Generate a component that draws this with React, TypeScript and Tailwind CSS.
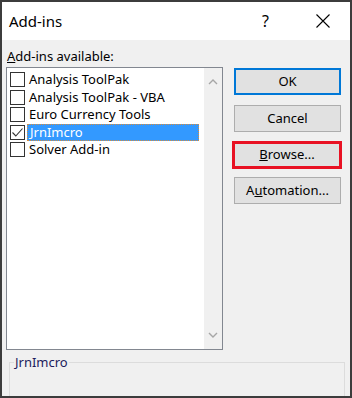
import React from "react";

const font = { fontFamily: '"Noto Sans", "Open Sans", sans-serif' };

const items = [
  { label: "Analysis ToolPak", checked: false, selected: false },
  { label: "Analysis ToolPak - VBA", checked: false, selected: false },
  { label: "Euro Currency Tools", checked: false, selected: false },
  { label: "JrnImcro", checked: true, selected: true },
  { label: "Solver Add-in", checked: false, selected: false },
];

function Box({ checked }: { checked: boolean }) {
  return (
    <div className="w-[15px] h-[15px] border border-[#333333] bg-white flex items-center justify-center shrink-0">
      {checked && (
        <svg width="13" height="13" viewBox="0 0 13 13">
          <path d="M1.5 6.5 L4.8 10 L11.5 2.5" fill="none" stroke="#333" strokeWidth="1.1" />
        </svg>
      )}
    </div>
  );
}

function Btn({ children, className = "" }: { children: React.ReactNode; className?: string }) {
  return (
    <div
      className={
        "h-[27px] w-[107px] bg-[#e1e1e1] flex items-center justify-center text-[13px] text-black " +
        className
      }
    >
      {children}
    </div>
  );
}

export default function App() {
  return (
    <div
      className="w-[352px] h-[398px] border-2 border-[#3c3c3c] bg-[#f0f0f0] flex flex-col overflow-hidden"
      style={font}
    >
      <div className="h-[38px] bg-white flex items-center shrink-0">
        <span className="ml-[7px] text-[15px] text-black">Add-ins</span>
        <span className="ml-auto mr-[47px] text-[16px] text-black">?</span>
        <svg width="14" height="14" viewBox="0 0 14 14" className="mr-[20px]">
          <path d="M0.5 0.5 L13.5 13.5 M13.5 0.5 L0.5 13.5" stroke="#000" strokeWidth="1.1" />
        </svg>
      </div>
      <div className="flex-1 flex flex-col pl-[4px] pr-[8px] pt-[7px]">
        <div className="text-[13px] leading-[18px] text-black ml-[1px]">
          <span className="underline">A</span>dd-ins available:
        </div>
        <div className="flex mt-[2px]">
          <div className="w-[218px] h-[283px] border border-[#828790] bg-white flex">
            <div className="flex-1 flex flex-col pt-[3px] pl-[3px]">
              {items.map((it) => (
                <div key={it.label} className="h-[17.5px] flex items-center">
                  <Box checked={it.checked} />
                  <div
                    className={
                      "ml-[2px] h-[17px] flex items-center pl-[2px] text-[13px] " +
                      (it.selected
                        ? "bg-[#3399ff] text-white w-[172px] border border-dotted border-[#d98c3a]"
                        : "text-black")
                    }
                  >
                    {it.label}
                  </div>
                </div>
              ))}
            </div>
            <div className="w-[18px] bg-[#f0f0f0] flex flex-col items-center justify-between py-[11px]">
              <svg width="10" height="6" viewBox="0 0 10 6">
                <path d="M1 5 L5 1 L9 5" fill="none" stroke="#a6a6a6" strokeWidth="1.4" />
              </svg>
              <svg width="10" height="6" viewBox="0 0 10 6">
                <path d="M1 1 L5 5 L9 1" fill="none" stroke="#a6a6a6" strokeWidth="1.4" />
              </svg>
            </div>
          </div>
          <div className="ml-[11px] flex flex-col">
            <Btn className="border-2 border-[#0078d7] mt-[1px]">OK</Btn>
            <Btn className="border border-[#adadad] mt-[10px]">Cancel</Btn>
            <div className="mt-[9px] -ml-[2px] border-[3px] border-[#e81123] w-[110px] h-[28px] flex items-center justify-center">
              <div className="w-[104px] h-[22px] bg-[#e1e1e1] flex items-center justify-center text-[13px] text-black">
                <span><span className="underline">B</span>rowse...</span>
              </div>
            </div>
            <Btn className="border border-[#adadad] mt-[8px]">
              <span>A<span className="underline">u</span>tomation...</span>
            </Btn>
          </div>
        </div>
        <div className="relative mt-[12px] ml-[3px] w-[336px] h-[60px] border border-[#dcdcdc]">
          <span className="absolute -top-[10px] left-[4px] px-[1px] bg-[#f0f0f0] text-[13px] leading-[18px] text-[#1c1c5c]">
            JrnImcro
          </span>
        </div>
      </div>
    </div>
  );
}
